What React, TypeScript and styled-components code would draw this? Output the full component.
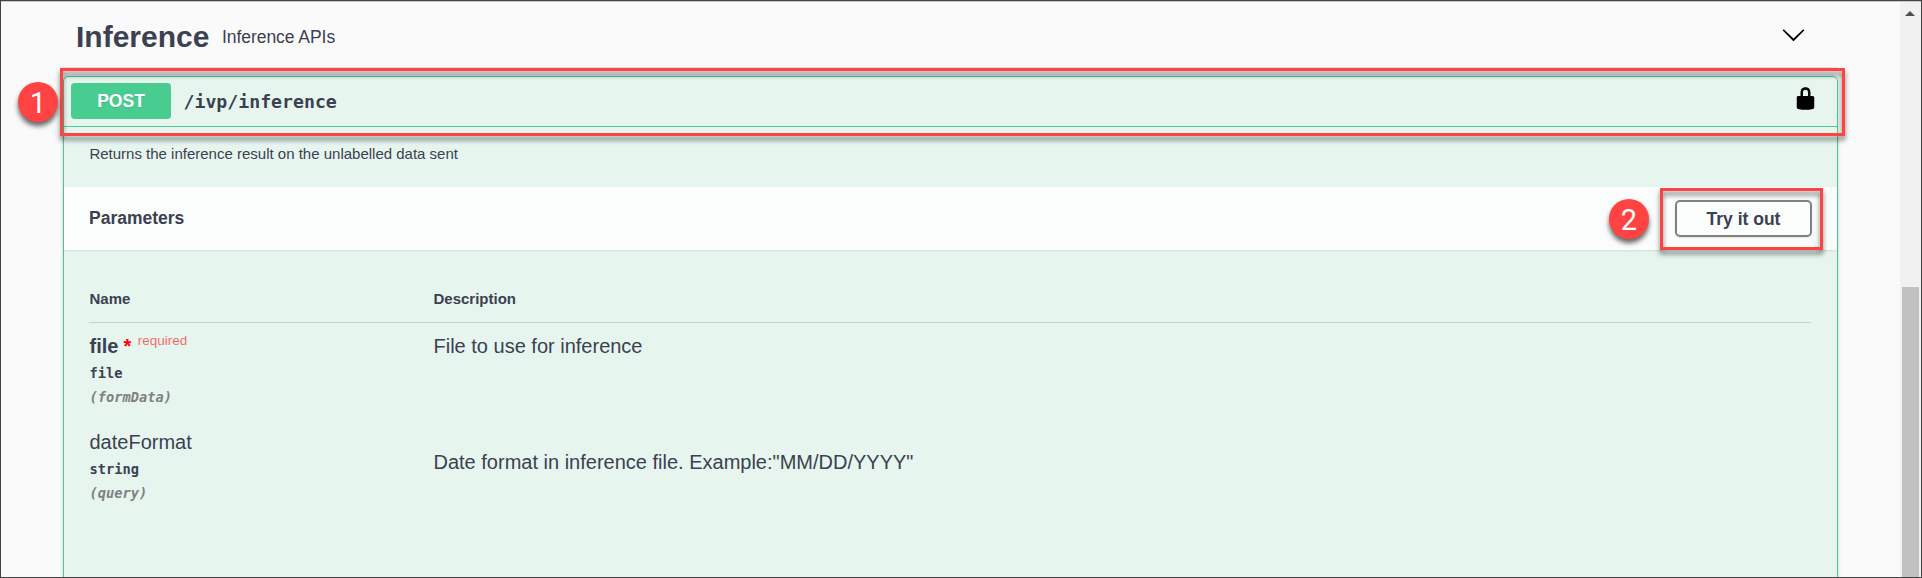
import React from "react";
import styled, { createGlobalStyle } from "styled-components";

const GlobalStyle = createGlobalStyle`
  *, *::before, *::after { box-sizing: border-box; }
  body { margin: 0; overflow: hidden; }
`;

const sans = `"Liberation Sans", Arial, sans-serif`;
const mono = `"DejaVu Sans Mono", Consolas, monospace`;

const Window = styled.div`
  display: flex;
  width: 1922px;
  height: 578px;
  overflow: hidden;
  border: 1px solid #444;
  background: #fafafa;
  box-shadow: inset 0 1px 0 #c8c8c8;
  color: #3b4151;
  font-family: ${sans};
`;

const Page = styled.main`
  flex: 1;
  padding: 1px 62px 0 62px;
`;

const TagHeader = styled.header`
  display: flex;
  align-items: center;
  height: 66px;
  padding: 0 32px 0 13px;
  border-bottom: 1px solid rgba(59, 65, 81, 0.12);
`;

const TagTitle = styled.h3`
  margin: 0;
  padding-top: 4px;
  font-size: 30px;
  line-height: 40px;
`;

const TagDescription = styled.small`
  flex: 1;
  padding: 5px 0 0 12.5px;
  font-size: 17.5px;
  letter-spacing: -0.04px;
  line-height: 26px;
`;

const ChevronIcon = styled.svg`
  width: 25px;
  height: 25px;
`;

const Operation = styled.section`
  position: relative;
  height: 520px;
  margin-top: 8px;
  border: 1px solid #49cc90;
  border-radius: 5px;
  background: rgba(73, 204, 144, 0.1);
  box-shadow: 0 0 3.75px rgba(0, 0, 0, 0.19);
`;

const Summary = styled.div`
  display: flex;
  align-items: center;
  height: 50px;
  padding: 0 19px 1px 7px;
  border-bottom: 1px solid #49cc90;
`;

const Method = styled.span`
  width: 100px;
  height: 36px;
  border-radius: 3.75px;
  background: #49cc90;
  color: #fff;
  font-size: 17.5px;
  font-weight: 700;
  line-height: 36px;
  text-align: center;
  text-shadow: 0 1px 0 rgba(0, 0, 0, 0.1);
`;

const Path = styled.span`
  flex: 1;
  padding: 1px 0 0 12.5px;
  font-family: ${mono};
  font-size: 18.2px;
  font-weight: 700;
  line-height: 24px;
`;

const LockIcon = styled.svg`
  width: 25px;
  height: 25px;
  margin-bottom: 5px;
`;

const OperationDescription = styled.p`
  height: 60px;
  margin: 0;
  padding: 17px 25px 0 25.4px;
  font-size: 15px;
  line-height: 19px;
`;

const SectionHeader = styled.div`
  display: flex;
  align-items: center;
  justify-content: space-between;
  height: 63px;
  padding: 0 25px;
  background: rgba(255, 255, 255, 0.8);
  box-shadow: 0 1px 2px rgba(0, 0, 0, 0.1);
`;

const SectionTitle = styled.h4`
  margin: 0 0 1px;
  font-size: 17.5px;
  line-height: 20px;
`;

const TryButton = styled.button`
  width: 137px;
  height: 37px;
  padding: 1px 0 0;
  border: 2px solid gray;
  border-radius: 5px;
  background: transparent;
  box-shadow: 0 1px 2px rgba(0, 0, 0, 0.1);
  color: #3b4151;
  font: 700 17.5px/20px ${sans};
`;

const Table = styled.div`
  display: grid;
  grid-template-columns: 344px 1fr;
  margin: 36px 26px 0 25px;
`;

const HeadCell = styled.div`
  height: 37px;
  padding: 3px 0 0 0.5px;
  border-bottom: 1px solid rgba(59, 65, 81, 0.2);
  font-size: 15px;
  font-weight: 700;
  line-height: 19px;
`;

const ParamCell = styled.div`
  height: 96px;
  padding: 10px 0 0 0.5px;
`;

const ParamName = styled.div<{ $required?: boolean }>`
  display: flex;
  height: 26px;
  font-size: 20px;
  font-weight: ${(p) => (p.$required ? 700 : 400)};
  line-height: 26px;
`;

const Star = styled.span`
  padding-left: 5px;
  color: #f00;
`;

const Required = styled.sup`
  padding-left: 6.5px;
  color: rgba(255, 0, 0, 0.6);
  font-size: 13.5px;
  font-weight: 400;
  line-height: 15px;
`;

const ParamType = styled.div<{ $location?: boolean }>`
  height: 24px;
  padding-top: 4px;
  color: ${(p) => (p.$location ? "gray" : "#3b4151")};
  font-family: ${mono};
  font-size: 13.7px;
  font-style: ${(p) => (p.$location ? "italic" : "normal")};
  font-weight: 700;
  line-height: 20px;
`;

const ParamDescription = styled.div<{ $offset: number }>`
  padding-top: ${(p) => p.$offset}px;
  font-size: 20px;
  line-height: 26px;
`;

const Scrollbar = styled.aside`
  display: flex;
  flex-direction: column;
  align-items: center;
  justify-content: space-between;
  width: 21px;
  margin-top: 1px;
  padding: 9px 1px 0 0;
  background: #f1f1f1;
`;

const ScrollArrow = styled.svg`
  width: 10px;
  height: 5px;
`;

const ScrollThumb = styled.div`
  width: 17px;
  height: 290px;
  background: #c1c1c1;
`;

const Outline = styled.div<{ $x: number; $y: number; $w: number; $h: number }>`
  position: absolute;
  left: ${(p) => p.$x}px;
  top: ${(p) => p.$y}px;
  width: ${(p) => p.$w}px;
  height: ${(p) => p.$h}px;
  border: 3px solid #ff4343;
  filter: drop-shadow(0 4px 2.5px rgba(0, 0, 0, 0.55));
  pointer-events: none;
`;

const StepBadge = styled.div<{ $x: number; $y: number }>`
  position: absolute;
  left: ${(p) => p.$x}px;
  top: ${(p) => p.$y}px;
  width: 40px;
  height: 40px;
  border-radius: 50%;
  background: #ff4343;
  box-shadow: 0 4px 5px rgba(0, 0, 0, 0.6);
  color: #fff;
  font-family: Roboto, sans-serif;
  font-size: 29px;
  line-height: 42px;
  text-align: center;
`;

const params = [
  { name: "file", type: "file", location: "formData", required: true, description: "File to use for inference", offset: 0 },
  { name: "dateFormat", type: "string", location: "query", required: false, description: 'Date format in inference file. Example:"MM/DD/YYYY"', offset: 20 },
];

export default function App() {
  return (
    <>
      <GlobalStyle />
      <Window>
        <Page>
          <TagHeader>
            <TagTitle>Inference</TagTitle>
            <TagDescription>Inference APIs</TagDescription>
            <ChevronIcon viewBox="0 0 20 20">
              <path d="M17.418 6.109c.272-.268.709-.268.979 0s.271.701 0 .969l-7.908 7.83c-.27.268-.707.268-.979 0l-7.908-7.83c-.27-.268-.27-.701 0-.969.271-.268.709-.268.979 0L10 13.25l7.418-7.141z" />
            </ChevronIcon>
          </TagHeader>
          <Operation>
            <Summary>
              <Method>POST</Method>
              <Path>/ivp/inference</Path>
              <LockIcon viewBox="0 0 20 20">
                <path d="M15.8 8H14V5.6C14 2.703 12.665 1 10 1 7.334 1 6 2.703 6 5.6V8H4c-.553 0-1 .646-1 1.199V17c0 .549.428 1.139.951 1.307l1.197.387C5.672 18.861 6.55 19 7.1 19h5.8c.549 0 1.428-.139 1.951-.307l1.196-.387c.524-.167.953-.757.953-1.306V9.199C17 8.646 16.352 8 15.8 8zM12 8H8V5.199C8 3.754 8.797 3 10 3c1.203 0 2 .754 2 2.199V8z" />
              </LockIcon>
            </Summary>
            <OperationDescription>Returns the inference result on the unlabelled data sent</OperationDescription>
            <SectionHeader>
              <SectionTitle>Parameters</SectionTitle>
              <TryButton>Try it out</TryButton>
            </SectionHeader>
            <Table>
              <HeadCell>Name</HeadCell>
              <HeadCell>Description</HeadCell>
              {params.map((p) => (
                <React.Fragment key={p.name}>
                  <ParamCell>
                    <ParamName $required={p.required}>
                      {p.name}
                      {p.required && <Star>*</Star>}
                      {p.required && <Required>required</Required>}
                    </ParamName>
                    <ParamType>{p.type}</ParamType>
                    <ParamType $location>({p.location})</ParamType>
                  </ParamCell>
                  <ParamCell>
                    <ParamDescription $offset={p.offset}>{p.description}</ParamDescription>
                  </ParamCell>
                </React.Fragment>
              ))}
            </Table>
            <Outline $x={-4} $y={-9} $w={1785} $h={68} />
            <StepBadge $x={-46} $y={5}>1</StepBadge>
            <Outline $x={1596} $y={111} $w={163} $h={62} />
            <StepBadge $x={1545} $y={122}>2</StepBadge>
          </Operation>
        </Page>
        <Scrollbar>
          <ScrollArrow viewBox="0 0 10 5">
            <path d="M0 5 5 0l5 5z" fill="#505050" />
          </ScrollArrow>
          <ScrollThumb />
        </Scrollbar>
      </Window>
    </>
  );
}
